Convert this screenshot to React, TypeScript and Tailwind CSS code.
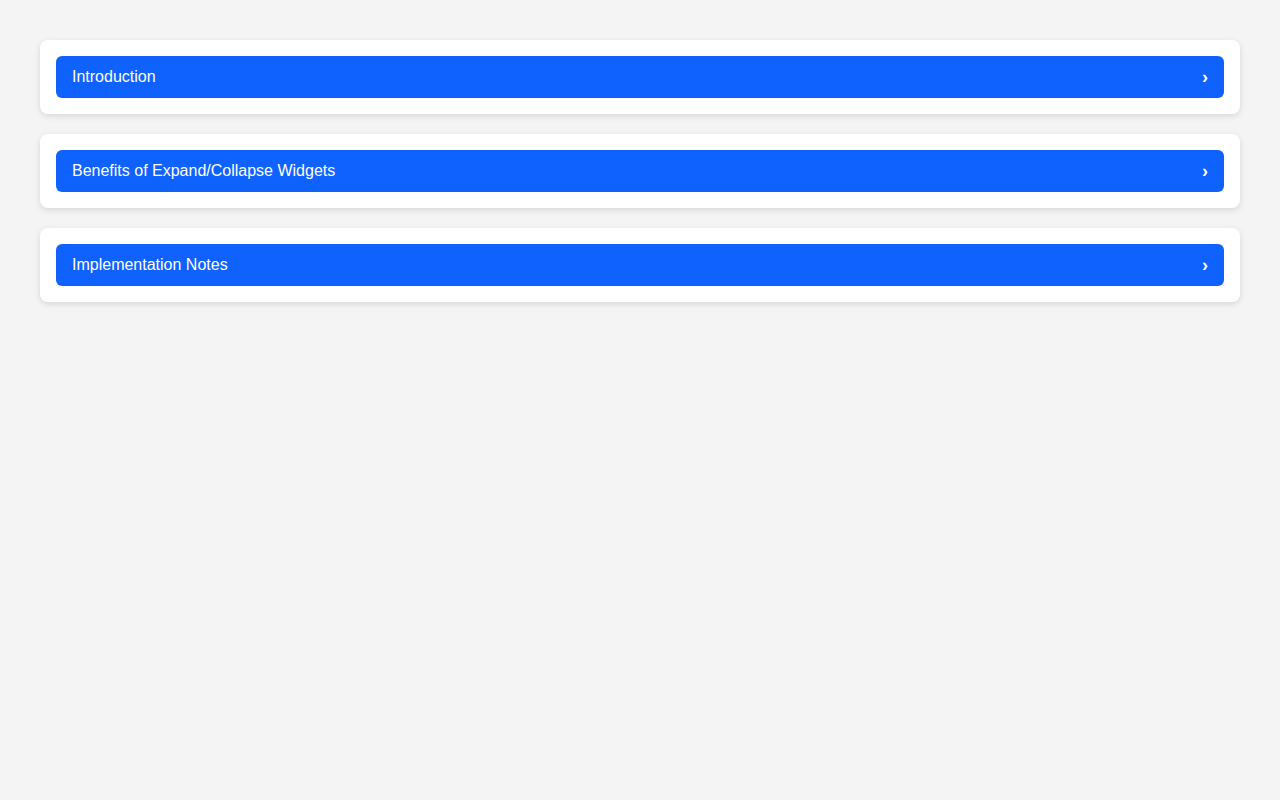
const sections = ['Introduction', 'Benefits of Expand/Collapse Widgets', 'Implementation Notes'];

export default function App() {
  return (
    <div className="min-h-screen bg-[#f4f4f4] p-10 font-['Liberation_Sans',Arial,sans-serif]">
      <div className="flex flex-col gap-5">
        {sections.map((title) => (
          <div key={title} className="rounded-lg bg-white p-4 shadow-[0_2px_6px_rgba(0,0,0,0.12)]">
            <button
              type="button"
              className="flex w-full items-center justify-between rounded-md bg-[#0f62fe] px-4 py-3 text-left text-base leading-[18px] text-white"
            >
              <span>{title}</span>
              <span className="text-lg font-bold leading-[18px]">›</span>
            </button>
          </div>
        ))}
      </div>
    </div>
  );
}
